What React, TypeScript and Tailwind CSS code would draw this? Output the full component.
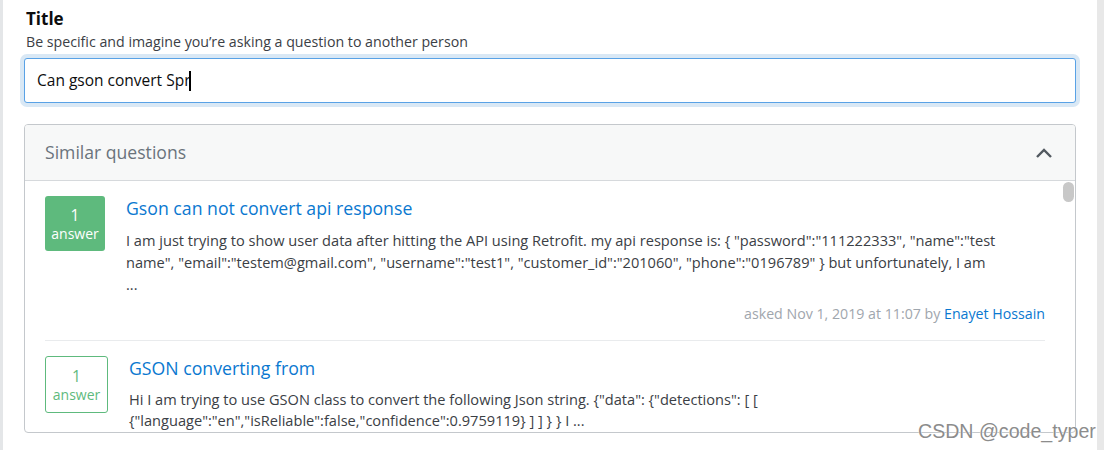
import React from "react";

const font = { fontFamily: '"Open Sans", "Noto Sans", Arial, sans-serif' };

function Badge({ filled }: { filled: boolean }) {
  return filled ? (
    <div className="flex h-[55px] w-[60px] shrink-0 flex-col items-center justify-center rounded-[3px] bg-[#5eba7d] text-white">
      <div className="text-[15.5px] leading-[20px]">1</div>
      <div className="text-[14px] leading-[18px]">answer</div>
    </div>
  ) : (
    <div className="flex h-[57px] w-[63px] shrink-0 flex-col items-center justify-center rounded-[3px] border border-[#5eba7d] text-[#5eba7d]">
      <div className="text-[15.5px] leading-[20px]">1</div>
      <div className="text-[14px] leading-[18px]">answer</div>
    </div>
  );
}

export default function App() {
  return (
    <div className="relative flex h-[450px] w-[1104px] overflow-hidden bg-white" style={font}>
      <div className="w-[3px] shrink-0 bg-[#e4e6e8]" />
      <div className="flex-1 px-[21px] pt-[7px]">
        <div className="ml-[2px] text-[17px] font-bold leading-[24px] text-[#0c0d0e]">Title</div>
        <div className="ml-[2px] mt-[1px] text-[14.2px] leading-[20px] text-[#3b4045]">
          Be specific and imagine you’re asking a question to another person
        </div>
        <div className="mt-[6px] rounded-[5px] bg-[#d9e8f5] p-[1px]">
          <div className="-m-[1px] flex h-[45px] items-center rounded-[3px] border border-[#59a2e6] bg-white pl-[12px] shadow-[0_0_0_4px_#d9e8f5]">
            <span className="text-[15.5px] text-[#0c0d0e]">Can gson convert Spr</span>
            <span className="ml-[-1px] inline-block h-[20px] w-[2px] bg-black" />
          </div>
        </div>
        <div className="relative mt-[21px] h-[309px] overflow-hidden rounded-[4px] border border-[#c4c8cc]">
          <div className="flex h-[56px] items-center justify-between border-b border-[#d6d9dc] bg-[#f7f8f8] pl-[20px] pr-[22px]">
            <span className="text-[17.6px] text-[#6a737c]">Similar questions</span>
            <svg width="18" height="12" viewBox="0 0 18 12" fill="none">
              <path d="M2 10 L9 3 L16 10" stroke="#525960" strokeWidth="2.4" />
            </svg>
          </div>
          <div className="absolute right-[1px] top-[57px] h-[20px] w-[11px] rounded-[6px] bg-[#c8c8c8]" />
          <div className="pl-[20px] pr-[30px]">
            <div className="flex gap-[21px] pt-[15px]">
              <Badge filled />
              <div className="flex-1">
                <div className="text-[17.7px] leading-[25px] text-[#0a78d0]">Gson can not convert api response</div>
                <div className="mt-[8px] text-[14.6px] leading-[22px] text-[#3b4045]">
                  <div className="whitespace-nowrap">
                    I am just trying to show user data after hitting the API using Retrofit. my api response is: {"{"} "password":"111222333", "name":"test
                  </div>
                  <div className="whitespace-nowrap">
                    name", "email":"testem@gmail.com", "username":"test1", "customer_id":"201060", "phone":"0196789" {"}"} but unfortunately, I am
                  </div>
                  <div className="whitespace-nowrap">...</div>
                </div>
                <div className="mt-[9px] text-right text-[14.2px] leading-[20px] text-[#9fa6ad]">
                  asked Nov 1, 2019 at 11:07 by <span className="text-[#0a78d0]">Enayet Hossain</span>
                </div>
              </div>
            </div>
            <div className="mt-[16px] border-b border-[#e9ebed]" />
            <div className="flex gap-[21px] pt-[15px]">
              <Badge filled={false} />
              <div className="flex-1">
                <div className="text-[17.7px] leading-[25px] text-[#0a78d0]">GSON converting from</div>
                <div className="mt-[8px] text-[14.6px] leading-[21px] text-[#3b4045]">
                  <div className="whitespace-nowrap">
                    Hi I am trying to use GSON class to convert the following Json string. {"{"}"data": {"{"}"detections": [ [
                  </div>
                  <div className="whitespace-nowrap">
                    {"{"}"language":"en","isReliable":false,"confidence":0.9759119{"}"} ] ] {"}"} {"}"} I ...
                  </div>
                </div>
              </div>
            </div>
          </div>
        </div>
      </div>
      <div className="w-[7px] shrink-0 bg-[#e8e8e8]" />
      <div
        className="absolute left-[918px] top-[419px] text-[19.6px] leading-[24px] text-[#8c8c8c]"
        style={{ fontFamily: '"Liberation Sans", Arial, sans-serif', textShadow: "0 0 1px #fff, 0 0 1px #fff" }}
      >
        CSDN @code_typer
      </div>
    </div>
  );
}
